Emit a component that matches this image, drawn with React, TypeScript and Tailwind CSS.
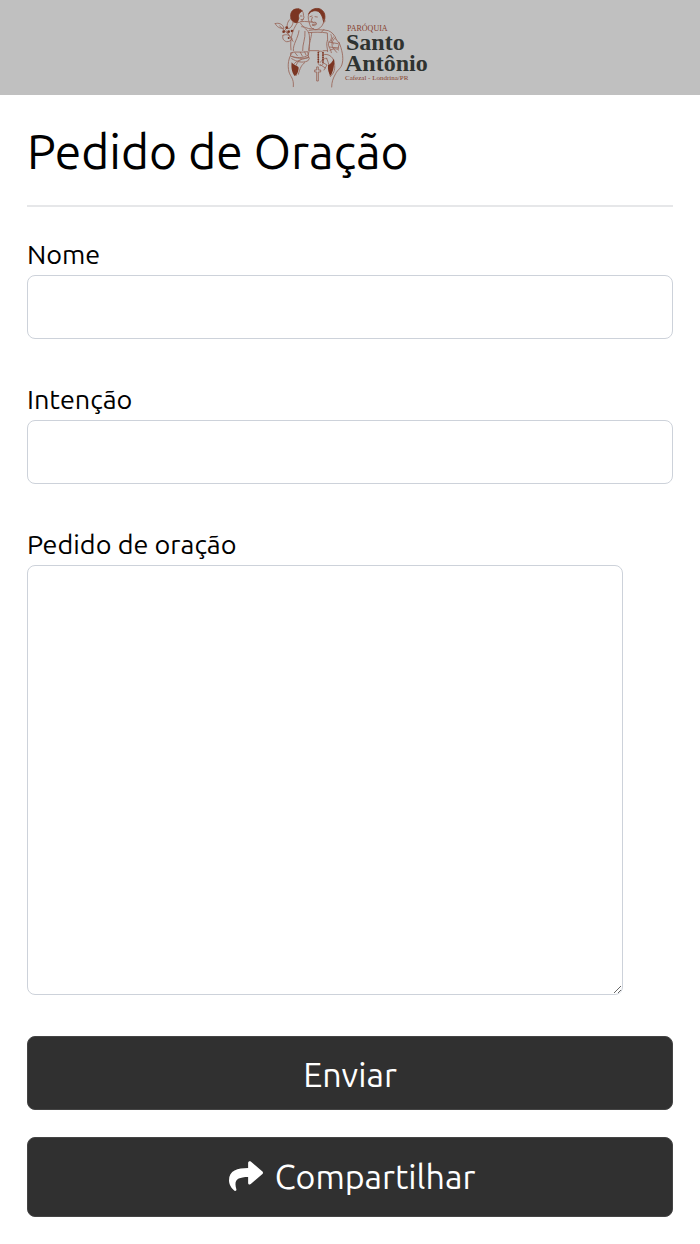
import React from 'react';
import { FaShare } from 'react-icons/fa';

function ParishLogo() {
  return (
    <svg
      viewBox="0 0 170 95"
      className="h-[95px] w-[170px]"
      role="img"
      aria-label="Paróquia Santo Antônio"
    >
      <g
        transform="scale(0.33333)"
        fill="none"
        stroke="#99675a"
        strokeWidth="2.6"
        strokeLinecap="round"
        strokeLinejoin="round"
      >
        {/* lily branch */}
        <path d="M31 71c9-4 23 1 26 14-12 1-22-4-26-14zM67 84c-3-12 3-24 14-31 6 11 3 24-6 31zM54 106c-3 8 1 16 10 19 8 1 14-3 17-8M54 106c9-4 20-3 27 11M44 78l27 26M64 92l20 32M54 96l10-10" />
        <g fill="#7b3522" stroke="none">
          <circle cx="65" cy="83" r="4" />
          <circle cx="56" cy="95" r="4" />
          <circle cx="71" cy="95" r="4" />
          <circle cx="81" cy="93" r="4" />
          <circle cx="71" cy="114" r="3" />
        </g>
        {/* child */}
        <path
          d="M100 27c-13-3-24 7-23 22 0 12 9 20 20 19 3-5 2-10 5-14-4-6 0-17 10-21-3-4-7-6-12-6z"
          fill="#7b3522"
          stroke="#7b3522"
        />
        <path d="M112 33c5 6 2 12 5 19-2 9-9 15-18 16M106 48h5M108 59l6-1M108 65c14-2 32 1 44 4M110 80c13 0 18 9 36 6M96 70c-13 20-22 45-18 80M107 70c8 15 24 18 26 36 2 22 1 46-4 62M102 92c-3 24-18 38-17 60M120 94c2 22-8 38-7 58" />
        <path d="M78 158c12-5 28 1 50-3l2 10c-14 10-38 9-52 4zM82 169c8 7 35 8 49 3M90 158l7 9M106 157l6 11M119 156l4 9M80 176c15 9 30 14 48 7l5-7-3-8" />
        {/* friar */}
        <path
          d="M131 42c5-20 41-25 48 1 2 10 0 18-3 23-3-14-6-24-15-31-10-6-24-2-30 7z"
          fill="#7b3522"
          stroke="#7b3522"
        />
        <path d="M131 42c-4 12 1 21 3 31 4 14 17 20 27 13 8-4 13-12 15-20M135 50l6-2M150 50l7 1M142 52l-4 12 6 2M142 73h9M174 58c8-1 8 10 1 11M150 66l6 5-7 6-7-1" />
        <path d="M132 91c16-3 44-2 58 1 10 4 20 13 24 27M130 98c20-2 38-2 57 1l1 22M140 98c-1 18-8 28-9 53M170 96l7-8M134 152h28M174 152h14M187 121c-5 13 1 23 1 34" />
        <path d="M198 104c4 9 0 16-7 24-4 10 7 19 8 30M211 113c-10 9-13 19-7 31l11 13M191 126l28 5M193 141l28 3M195 151c10-5 16-7 26-1M205 111l-7 13 8 8M214 119l9 11-4 16" />
        <path d="M222 127c9 21 14 45 10 62-3 17-14 19-20 32-8 14-12 25-12 40M82 158c-12 14-15 38-10 58 5 16 15 18 13 44M130 173c-24 6-45 10-46 30-1 13 6 20 11 23M106 180c-12 8-19 24-16 43M119 188c-9 6-14 16-19 35M172 165c20-8 37 9 37 31 1 15-3 24-13 34M184 174c10 17 9 37 11 53M166 187c6-10 14-13 20-11" />
        <path d="M80 187c8 12 22 11 21 17-1 10-4 21-12 24-9-11-11-26-9-41zM207 176c2 17-2 38-10 51-7-8-9-18-8-31 7-3 13-12 18-20z" fill="#7b3522" stroke="none" />
        {/* rosary */}
        <path d="M160 158c3-7 13-6 14 2v31c-2 8-12 8-14 0z" />
        <path d="M160 157v32M174 158v32" stroke="#7b3522" strokeWidth="5" strokeDasharray="1 6" />
        <path d="M155 202v8h-6v6h6v27h5v-27h7v-6h-7v-8zM166 194l15 10M174 188l12 7-9 15" />
      </g>
      <g className="font-['Liberation_Serif',serif]">
        <text x="82" y="31" fontSize="8" fill="#87412f">PARÓQUIA</text>
        <text x="81" y="50" fontSize="24" fontWeight="700" fill="#2f3331">Santo</text>
        <text x="80" y="71" fontSize="24" fontWeight="700" fill="#2f3331">Antônio</text>
        <text x="80" y="80" fontSize="7" fill="#87412f">Cafezal - Londrina/PR</text>
      </g>
    </svg>
  );
}

const LABEL = 'mb-[5px] block text-[27px] leading-8';
const FIELD = 'block rounded-lg border border-[#cdd2da] bg-white px-4 text-[27px] outline-none';
const BUTTON =
  'flex w-full items-center justify-center gap-3 rounded-lg border border-[#444444] bg-[#303030] text-[34px] leading-10 text-white';

export default function App() {
  return (
    <div className="min-h-screen bg-white font-['Ubuntu','Noto_Sans',sans-serif] text-black">
      <header className="flex justify-center bg-[#c0c0c0]">
        <ParishLogo />
      </header>

      <main className="px-[27px] py-7">
        <h1 className="border-b-2 border-[#e6e7e9] pb-[26px] text-[48px] leading-[56px]">
          Pedido de Oração
        </h1>

        <form className="pt-[31px]" onSubmit={(e) => e.preventDefault()}>
          <div className="mb-11">
            <label htmlFor="nome" className={LABEL}>Nome</label>
            <input id="nome" name="nome" type="text" className={`${FIELD} h-16 w-full`} />
          </div>
          <div className="mb-11">
            <label htmlFor="intencao" className={LABEL}>Intenção</label>
            <input id="intencao" name="intencao" type="text" className={`${FIELD} h-16 w-full`} />
          </div>
          <div className="mb-[41px]">
            <label htmlFor="pedido" className={LABEL}>Pedido de oração</label>
            <textarea
              id="pedido"
              name="pedido"
              className={`${FIELD} h-[430px] w-[596px] max-w-full resize py-3`}
            />
          </div>
          <button type="submit" className={`${BUTTON} h-[74px] pt-0.5`}>Enviar</button>
          <button type="button" className={`${BUTTON} mt-[27px] h-20 pb-0.5 pl-1`}>
            <FaShare className="size-[34px]" aria-hidden="true" />
            Compartilhar
          </button>
        </form>
      </main>
    </div>
  );
}
